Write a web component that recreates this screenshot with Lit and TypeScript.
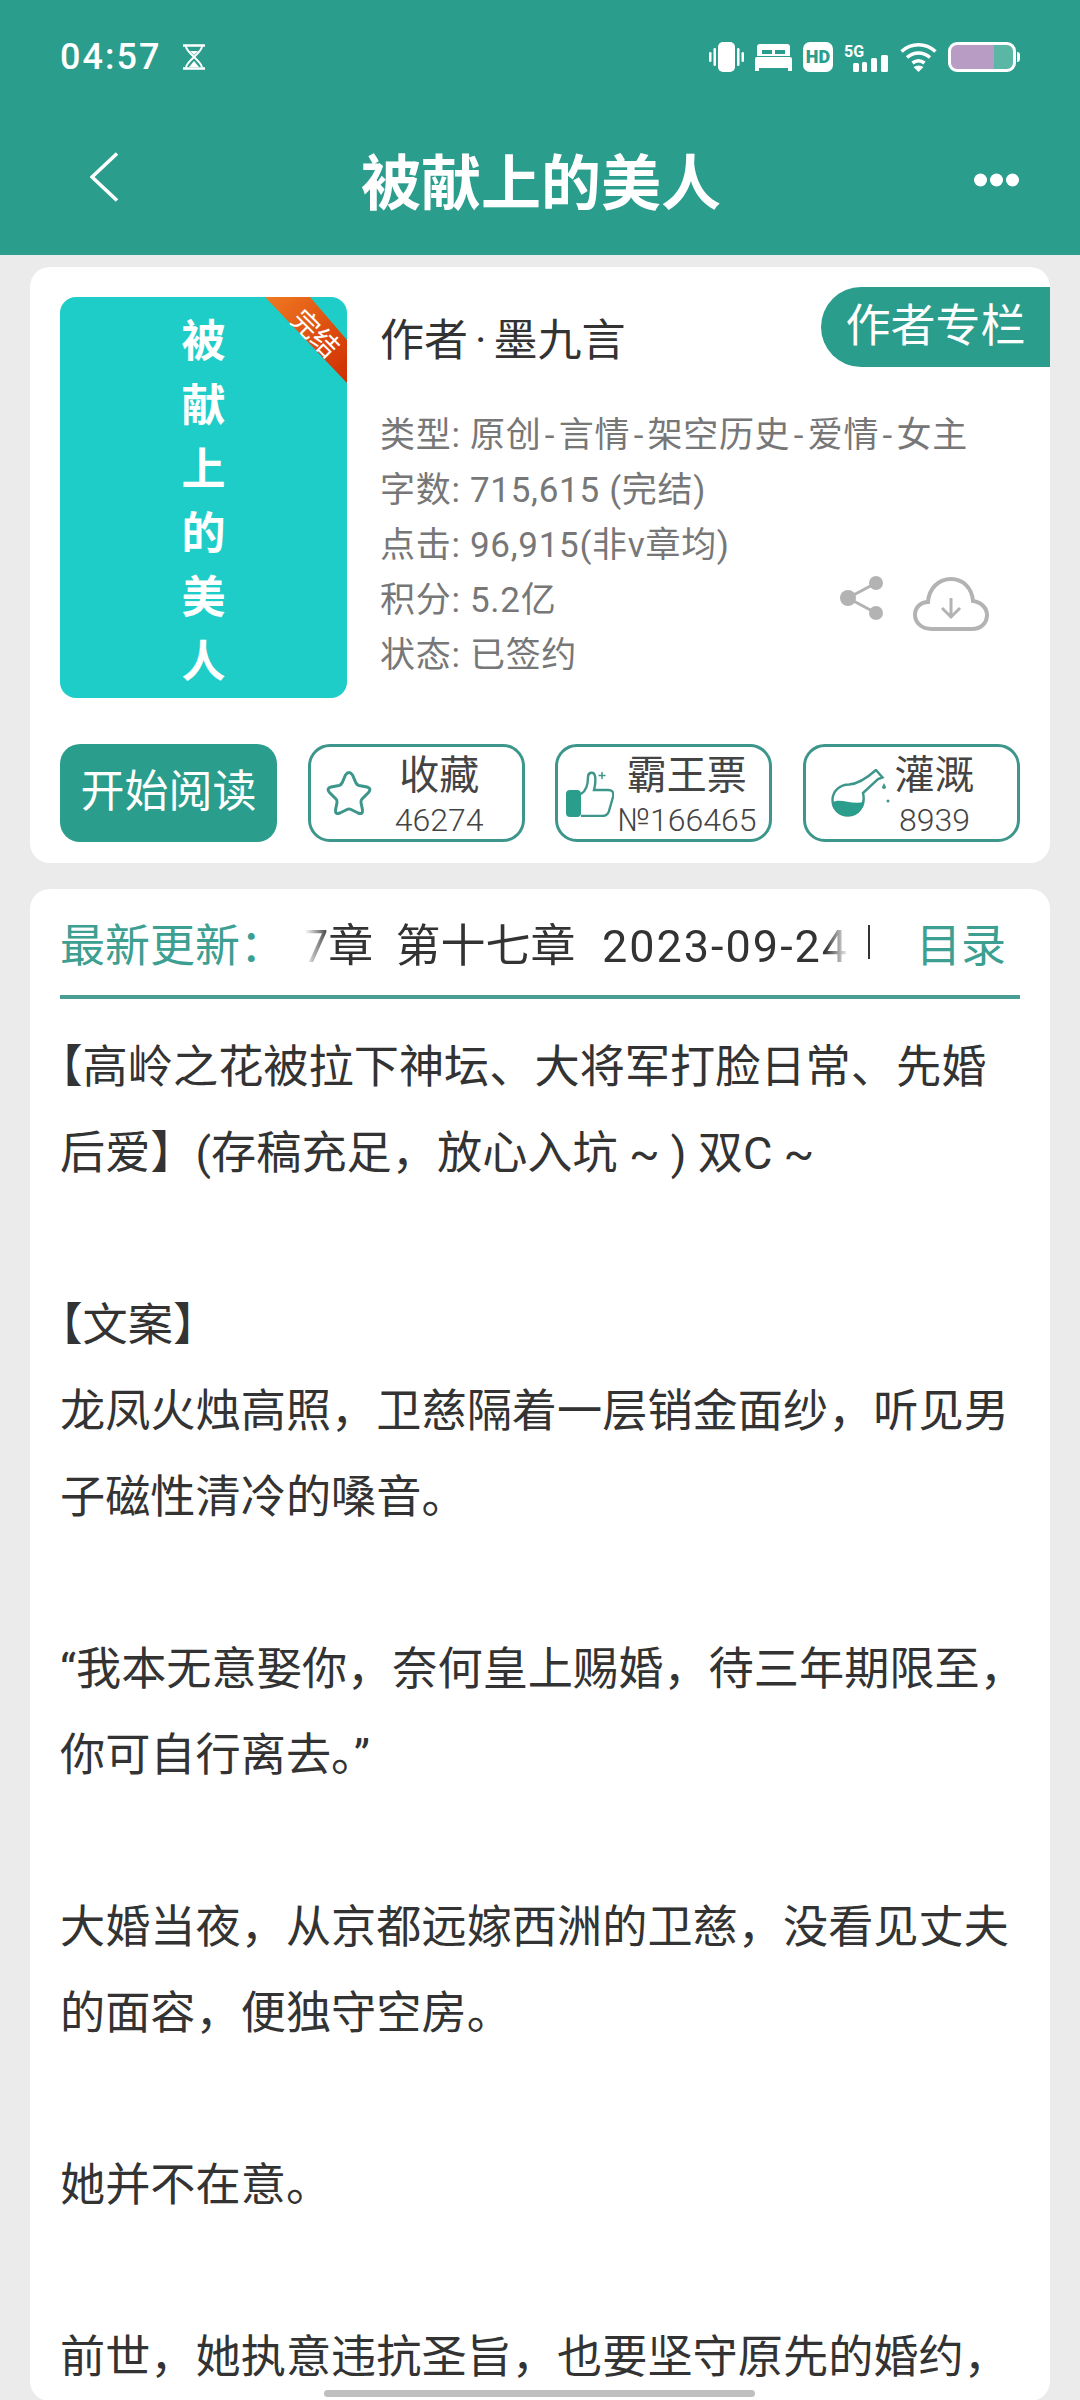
import { LitElement, css, html } from "lit";
import { customElement } from "lit/decorators.js";

@customElement("app-root")
export class AppRoot extends LitElement {
  static styles = css`
    * {
      box-sizing: border-box;
    }

    :host {
      display: block;
      width: 1080px;
      height: 2400px;
      position: relative;
      overflow: hidden;
      background: #ebebeb;
      font-family: Roboto, "Noto Sans CJK SC", sans-serif;
      color: #333;
    }

    svg {
      display: block;
      flex: none;
    }

    .header {
      height: 255px;
      background: #2a9d8c;
      color: #fff;
    }

    .status {
      height: 72px;
      padding: 42px 60px 0;
      display: flex;
      align-items: center;
      justify-content: space-between;
    }

    .time {
      display: flex;
      align-items: center;
      gap: 21px;
      font-size: 36px;
      font-weight: 500;
      letter-spacing: 2px;
    }

    .status-icons {
      display: flex;
      align-items: center;
      gap: 11px;
    }

    .titlebar {
      height: 150px;
      margin-top: 31px;
      padding: 0 61px 0 90px;
      display: flex;
      align-items: center;
      justify-content: space-between;
    }

    .titlebar h1 {
      margin: 0;
      font-size: 60px;
      font-weight: 700;
    }

    .titlebar .back {
      margin-top: -3px;
    }

    .titlebar .dots {
      margin: 4px 0 0 10px;
    }

    .main {
      padding: 12px 30px 0;
      display: flex;
      flex-direction: column;
      gap: 26px;
    }

    .card {
      background: #fff;
      border-radius: 20px;
    }

    .book {
      height: 596px;
    }

    .top {
      display: flex;
      gap: 33px;
      padding: 30px 0 0 30px;
    }

    .cover {
      position: relative;
      width: 287px;
      height: 401px;
      flex: none;
      padding-top: 13px;
      border-radius: 16px;
      background: #1ecdc8;
      color: #fff;
      display: flex;
      flex-direction: column;
      align-items: center;
      font-size: 44px;
      font-weight: 700;
      line-height: 64px;
    }

    .ribbon {
      position: absolute;
      top: 0;
      right: 0;
    }

    .ribbon-text {
      position: absolute;
      top: 19px;
      left: 228px;
      font-size: 27px;
      line-height: 36px;
      font-weight: 400;
      transform: rotate(45deg);
    }

    .info {
      flex: 1;
      min-width: 0;
    }

    .author-row {
      margin-top: -10px;
      display: flex;
      justify-content: space-between;
    }

    .author {
      padding-top: 24px;
      font-size: 44px;
      line-height: 60px;
      color: #333;
    }

    .author i {
      font-style: normal;
      margin: 0 7px;
    }

    .column-btn {
      width: 229px;
      height: 80px;
      border-radius: 40px 0 0 40px;
      background: #2a9d8c;
      color: #fff;
      font-size: 45px;
      line-height: 80px;
      text-align: center;
    }

    .meta {
      margin-top: 37px;
      font-size: 35px;
      letter-spacing: 0.7px;
      line-height: 55px;
      color: #777;
      white-space: nowrap;
    }

    .dash {
      margin: 0 3.5px;
    }

    .meta-row {
      display: flex;
      justify-content: space-between;
    }

    .tools {
      display: flex;
      gap: 28px;
      align-items: flex-start;
      margin: 113px 60px 0 0;
    }

    .actions {
      display: grid;
      grid-template-columns: repeat(4, 217px);
      justify-content: space-between;
      margin: 46px 30px 0;
      height: 97px;
    }

    .read {
      border-radius: 20px;
      background: #2a9d8c;
      color: #fff;
      font-size: 44px;
      line-height: 97px;
      text-align: center;
    }

    .action {
      display: grid;
      grid-template-columns: 46px 1fr;
      align-items: center;
      border: 3.5px solid #3d968b;
      border-radius: 22px;
    }

    .icon-star {
      margin-left: 14px;
    }

    .icon-thumb {
      margin-left: 8px;
    }

    .icon-flask {
      margin-left: 25px;
    }

    .action-label {
      display: flex;
      flex-direction: column;
      align-items: center;
      padding-top: 3px;
      color: #444;
      font-size: 40px;
      line-height: 51px;
      white-space: nowrap;
    }

    .action-label small {
      font-size: 32px;
      font-weight: 300;
      line-height: 38px;
    }

    .content {
      flex: 1;
      height: 1530px;
      padding: 0 30px;
    }

    .latest {
      height: 110px;
      border-bottom: 4px solid #4a9d92;
      display: flex;
      align-items: center;
      font-size: 45px;
    }

    .latest-label {
      width: 245px;
      flex: none;
      color: #3d9f91;
    }

    .marquee {
      width: 544px;
      flex: none;
      overflow: hidden;
      white-space: pre;
      -webkit-mask-image: linear-gradient(
        90deg,
        transparent 0,
        #000 24px,
        #000 520px,
        transparent 100%
      );
      mask-image: linear-gradient(
        90deg,
        transparent 0,
        #000 24px,
        #000 520px,
        transparent 100%
      );
    }

    .marquee span {
      display: block;
      margin-left: -2px;
    }

    .marquee b {
      margin-left: 4px;
      font-weight: 400;
      letter-spacing: 2px;
    }

    .sep {
      width: 2px;
      height: 34px;
      margin-left: 19px;
      background: #333;
      flex: none;
    }

    .toc {
      margin-left: 46px;
      color: #3d9f91;
    }

    .body {
      width: 969px;
      padding-top: 26px;
      font-size: 45.2px;
      line-height: 86px;
      color: #333;
      text-spacing-trim: trim-start;
    }

    .body p {
      margin: 0;
    }

    .home {
      position: absolute;
      left: 324px;
      top: 2390px;
      width: 431px;
      height: 7px;
      border-radius: 4px;
      background: #bfbfbf;
    }
  `;

  render() {
    return html`
      <div class="header">
        <div class="status">
          <div class="time">
            <span>04:57</span>
            <svg width="24" height="26" viewBox="0 0 24 26" fill="none" stroke="#fff">
              <path stroke-width="2.4" d="M1 1.5h22M1 24.5h22" />
              <path stroke-width="2" d="M4 2.5c0 6 16 15 16 21M20 2.5c0 6-16 15-16 21" />
              <path fill="#fff" stroke="none" d="M8 7h8l-4 4zM12 17l5 6H7z" />
            </svg>
          </div>
          <div class="status-icons">
            <svg width="35" height="30" viewBox="0 0 35 30" fill="#fff">
              <rect x="9" y="0" width="17" height="30" rx="5" />
              <rect x="4.5" y="6" width="2.5" height="18" rx="1.2" />
              <rect x="0" y="10" width="2.5" height="10" rx="1.2" />
              <rect x="28" y="6" width="2.5" height="18" rx="1.2" />
              <rect x="32.5" y="10" width="2.5" height="10" rx="1.2" />
            </svg>
            <svg width="37" height="27" viewBox="0 0 37 27" fill="#fff">
              <path
                fill-rule="evenodd"
                d="M5 0h27q3 0 3 3v9H2V3q0-3 3-3zM7 6v4h10V6zM20 6v4h10V6z"
              />
              <path d="M2 13h33q2 0 2 2v9H0v-9q0-2 2-2zM0 24h4v3H0zM33 24h4v3h-4z" />
            </svg>
            <svg width="30" height="30" viewBox="0 0 30 30">
              <rect width="30" height="30" rx="7" fill="#fff" />
              <text x="15" y="21" text-anchor="middle" font-size="18" font-weight="900" fill="#2a9d8c" font-family="Roboto, sans-serif">HD</text>
            </svg>
            <svg class="signal" width="45" height="30" viewBox="0 0 45 30" fill="#fff">
              <text x="0" y="15" font-size="16" font-weight="700" font-family="Roboto, sans-serif">5G</text>
              <rect x="9" y="21" width="6" height="9" rx="1.5" />
              <rect x="18" y="20" width="5" height="10" rx="1.5" />
              <rect x="27" y="16" width="6" height="14" rx="1.5" />
              <rect x="37" y="13" width="7" height="17" rx="1.5" />
            </svg>
            <svg width="37" height="30" viewBox="0 0 37 30" fill="none" stroke="#fff" stroke-width="3.6">
              <path d="M1.5 9.5c10-9 24-9 34 0M7 15.5c7-6 16-6 23 0M12.5 21c4-3 8-3 12 0" />
              <path fill="#fff" stroke="none" d="M13.5 25q5-3 10 0l-5 5z" />
            </svg>
            <svg width="72" height="30" viewBox="0 0 72 30">
              <rect x="2" y="2" width="64" height="26" rx="7" fill="#5bb7a5" />
              <path d="M9 2h37v26H9q-7 0-7-7V9q0-7 7-7z" fill="#b89cc4" />
              <rect x="1.5" y="1.5" width="65" height="27" rx="7.5" fill="none" stroke="#fff" stroke-width="3" />
              <path d="M69 10q3 0 3 3v4q0 3-3 3z" fill="#fff" />
            </svg>
          </div>
        </div>
        <div class="titlebar">
          <svg class="back" width="28" height="50" viewBox="0 0 28 50" fill="none" stroke="#fff" stroke-width="3.6">
            <path d="M27 1.5 2 25l25 23.5" />
          </svg>
          <h1>被献上的美人</h1>
          <svg class="dots" width="45" height="14" viewBox="0 0 45 14" fill="#fff">
            <circle cx="6.5" cy="7" r="6.5" />
            <circle cx="22.5" cy="7" r="6.5" />
            <circle cx="38.5" cy="7" r="6.5" />
          </svg>
        </div>
      </div>

      <div class="main">
        <section class="card book">
          <div class="top">
            <div class="cover">
              <span>被</span><span>献</span><span>上</span><span>的</span><span>美</span><span>人</span>
              <svg class="ribbon" width="82" height="86" viewBox="0 0 82 86">
                <defs>
                  <linearGradient id="rb" x1="0" y1="0" x2="1" y2="1">
                    <stop offset="0" stop-color="#f07a22" />
                    <stop offset="1" stop-color="#cf2c02" />
                  </linearGradient>
                </defs>
                <polygon points="0,0 45,0 82,43 82,86" fill="url(#rb)" />
              </svg>
              <span class="ribbon-text">完结</span>
            </div>
            <div class="info">
              <div class="author-row">
                <div class="author">作者<i>·</i>墨九言</div>
                <div class="column-btn">作者专栏</div>
              </div>
              <div class="meta">
                <div>类型: 原创<span class="dash">-</span>言情<span class="dash">-</span>架空历史<span class="dash">-</span>爱情<span class="dash">-</span>女主</div>
                <div class="meta-row">
                  <div>
                    <div>字数: 715,615 (完结)</div>
                    <div>点击: 96,915(非v章均)</div>
                    <div>积分: 5.2亿</div>
                    <div>状态: 已签约</div>
                  </div>
                  <div class="tools">
                    <svg width="44" height="45" viewBox="0 0 44 45" fill="#b3b3b3" stroke="#b3b3b3">
                      <path fill="none" stroke-width="3" d="M36 7 8 22l28 15" />
                      <circle cx="36" cy="7" r="7" stroke="none" />
                      <circle cx="8" cy="22" r="8" stroke="none" />
                      <circle cx="36" cy="37" r="7" stroke="none" />
                    </svg>
                    <svg width="78" height="56" viewBox="0 0 78 56" fill="none" stroke="#b3b3b3">
                      <path stroke-width="4" d="M20 53C9 53 3 46 3 39c0-8 6-13 13-13C17 12 27 3 39 3c12 0 21 9 22 22 8 1 14 7 14 14 0 8-6 14-15 14z" />
                      <path stroke-width="3" d="M39 22v19M30 32l9 9 9-9" />
                    </svg>
                  </div>
                </div>
              </div>
            </div>
          </div>

          <div class="actions">
            <div class="read">开始阅读</div>
            <div class="action">
              <svg class="icon-star" width="48" height="48" viewBox="0 0 48 48" fill="none" stroke="#3d968b" stroke-width="3">
                <path d="M20.500 6Q24 1 27.500 6L31 14Q32 16 34 16.500L42 18Q47 19.500 43.500 23.500L37 30Q35.500 31.500 36 33.500L37.500 41Q38 46 33 44L26 40.500Q24 39.500 22 40.500L15 44Q10 46 10.500 41L12 33.500Q12.500 31.500 11 30L4.500 23.500Q1 19.500 6 18L14 16.500Q16 16 17 14Z" />
              </svg>
              <div class="action-label">收藏<small>46274</small></div>
            </div>
            <div class="action">
              <svg class="icon-thumb" width="48" height="48" viewBox="0 0 48 48" fill="none" stroke="#3d968b" stroke-width="2.400">
                <rect x="0" y="21" width="15" height="27" rx="4" fill="#2a9d8c" stroke="none" />
                <path d="M15 25c5-3 7-9 7-17 0-5 6-6 7-1s0 10-1 14h14c5 0 6 3 5 7l-4 14c-1 4-4 5-7 5H15" />
                <path stroke-width="1.500" d="M36 3v7M32.500 6.500h7" />
              </svg>
              <div class="action-label">霸王票<small>№166465</small></div>
            </div>
            <div class="action">
              <svg class="icon-flask" width="60" height="48" viewBox="0 0 60 48" fill="none" stroke="#3d968b" stroke-width="2.400">
                <path d="M45 1l6.500 7.500L47 10 32 24c3 13-5 22.500-15 22.500-9 0-15.500-6.500-15.500-15.500 0-9 7.500-15.500 16.500-15.500 9-.500 18-6.500 27-14.500z" />
                <path fill="#2a9d8c" stroke="none" d="M2 33c8-4 18 3 31 0-1 8-7 14-16 14S2 41 2 33z" />
                <path fill="#3d968b" stroke="none" d="M53 14l2 4a2 2 0 0 1-4 0z" />
                <circle cx="57" cy="32" r="1.500" fill="#3d968b" stroke="none" />
              </svg>
              <div class="action-label">灌溉<small>8939</small></div>
            </div>
          </div>
        </section>

        <section class="card content">
          <div class="latest">
            <div class="latest-label">最新更新：</div>
            <div class="marquee"><span>7章  第十七章  <b>2023-09-24</b></span></div>
            <div class="sep"></div>
            <div class="toc">目录</div>
          </div>
          <div class="body">
            <p>【高岭之花被拉下神坛、大将军打脸日常、先婚后爱】(存稿充足，放心入坑 ~ ) 双C ~</p>
            <p><br /></p>
            <p>【文案】</p>
            <p>龙凤火烛高照，卫慈隔着一层销金面纱，听见男子磁性清冷的嗓音。</p>
            <p><br /></p>
            <p>“我本无意娶你，奈何皇上赐婚，待三年期限至，你可自行离去。”</p>
            <p><br /></p>
            <p>大婚当夜，从京都远嫁西洲的卫慈，没看见丈夫的面容，便独守空房。</p>
            <p><br /></p>
            <p>她并不在意。</p>
            <p><br /></p>
            <p>前世，她执意违抗圣旨，也要坚守原先的婚约，</p>
          </div>
        </section>
      </div>

      <div class="home"></div>
    `;
  }
}
